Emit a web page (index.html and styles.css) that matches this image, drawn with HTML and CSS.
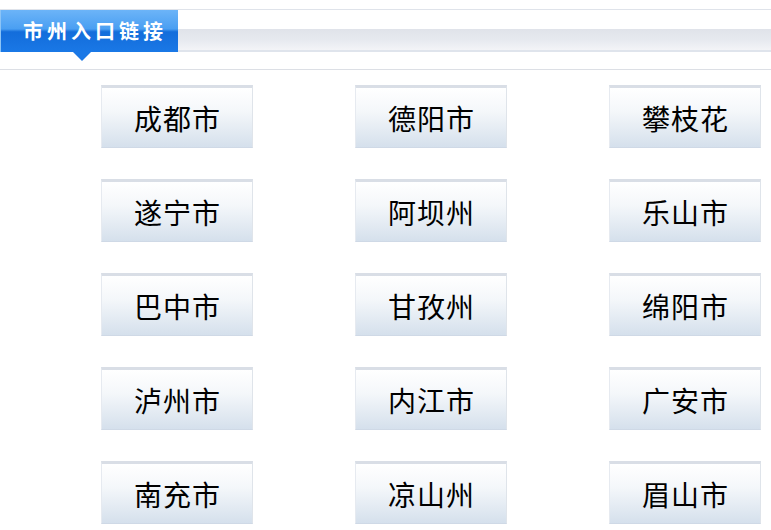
FILE: index.html
```html
<!DOCTYPE html>
<html lang="zh-CN">
<head>
<meta charset="utf-8">
<title>市州入口链接</title>
<link rel="stylesheet" href="styles.css">
</head>
<body>
<div class="panel">
  <div class="head">
    <div class="tab">市州入口链接<span class="arrow"></span></div>
    <div class="band"></div>
  </div>
  <div class="grid">
    <a class="btn">成都市</a>
    <a class="btn">德阳市</a>
    <a class="btn">攀枝花</a>
    <a class="btn">遂宁市</a>
    <a class="btn">阿坝州</a>
    <a class="btn">乐山市</a>
    <a class="btn">巴中市</a>
    <a class="btn">甘孜州</a>
    <a class="btn">绵阳市</a>
    <a class="btn">泸州市</a>
    <a class="btn">内江市</a>
    <a class="btn">广安市</a>
    <a class="btn">南充市</a>
    <a class="btn">凉山州</a>
    <a class="btn">眉山市</a>
  </div>
</div>
</body>
</html>
```

FILE: styles.css
```css
html, body {
  margin: 0;
  padding: 0;
  background: #ffffff;
  font-family: "Noto Sans CJK SC", "Noto Sans", sans-serif;
}
.panel {
  width: 771px;
  padding-top: 9px;
}
.head {
  display: flex;
  align-items: flex-start;
  height: 59px;
  border-top: 1px solid #dfe3ea;
  border-bottom: 1px solid #dcdfe5;
}
.tab {
  position: relative;
  width: 178px;
  height: 42px;
  box-sizing: border-box;
  background: linear-gradient(#6cb4f8 0%, #4a9ff2 45%, #136ddb 52%, #1a78e6 100%);
  border-left: 1px solid #8cc4f6;
  color: #ffffff;
  font-weight: bold;
  font-size: 20px;
  letter-spacing: 4px;
  line-height: 42px;
  padding-left: 22px;
  white-space: nowrap;
}
.arrow {
  position: absolute;
  left: 72px;
  top: 42px;
  width: 0;
  height: 0;
  border-left: 9px solid transparent;
  border-right: 9px solid transparent;
  border-top: 9px solid #1a78e6;
}
.band {
  flex: 1;
  margin-top: 19px;
  height: 23px;
  box-sizing: border-box;
  background: linear-gradient(#e0e3ea 0%, #e6e9ef 50%, #f3f4f7 100%);
  border-bottom: 2px solid #dfe4ec;
}
.grid {
  display: grid;
  grid-template-columns: repeat(3, 152px);
  column-gap: 102px;
  row-gap: 31px;
  padding: 15px 0 0 101px;
}
.btn {
  display: flex;
  align-items: center;
  justify-content: center;
  height: 63px;
  box-sizing: border-box;
  border-top: 3px solid #d9dee6;
  border-left: 1px solid #e6eaf0;
  border-right: 1px solid #dfe4ea;
  border-bottom: 1px solid #cfd9e6;
  background: linear-gradient(#ffffff 0%, #f4f7fa 40%, #d5e0ec 100%);
  color: #000000;
  font-size: 28px;
  line-height: 1;
  padding-top: 1px;
  letter-spacing: 1px;
  padding-left: 1px;
}
```
